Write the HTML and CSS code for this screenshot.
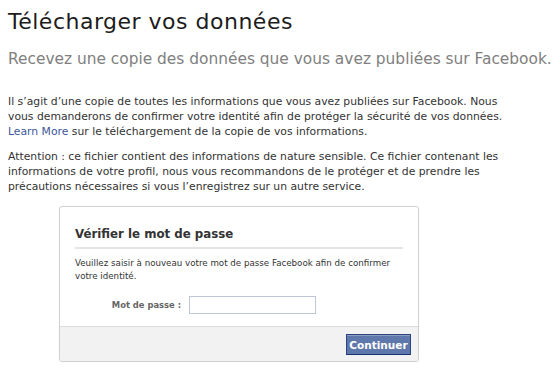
FILE: index.html
```html
<!DOCTYPE html>
<html lang="fr">
<head>
    <meta charset="UTF-8">
    <title>Télécharger vos données</title>
    <link rel="stylesheet" href="styles.css">
</head>
<body>
    <h1 class="title">Télécharger vos données</h1>
    <h2 class="subtitle">Recevez une copie des données que vous avez publiées sur Facebook.</h2>

    <p class="info">Il s’agit d’une copie de toutes les informations que vous avez publiées sur Facebook. Nous vous demanderons de confirmer votre identité afin de protéger la sécurité de vos données. <a href="#">Learn More</a> sur le téléchargement de la copie de vos informations.</p>
    <p class="info">Attention : ce fichier contient des informations de nature sensible. Ce fichier contenant les informations de votre profil, nous vous recommandons de le protéger et de prendre les précautions nécessaires si vous l’enregistrez sur un autre service.</p>

    <div class="dialog">
        <div class="dialog-body">
            <h3 class="dialog-title">Vérifier le mot de passe</h3>
            <p class="dialog-text">Veuillez saisir à nouveau votre mot de passe Facebook afin de confirmer votre identité.</p>
            <div class="field">
                <label for="password">Mot de passe :</label>
                <input type="password" id="password">
            </div>
        </div>
        <div class="dialog-footer">
            <button type="button">Continuer</button>
        </div>
    </div>
</body>
</html>
```

FILE: styles.css
```css
body {
    margin: 0;
    padding: 9px 8px 0 8px;
    font-family: "DejaVu Sans", sans-serif;
    font-size: 11px;
    color: #333;
    background: white;
}
.title {
    margin: 0;
    font-size: 22px;
    font-weight: normal;
    letter-spacing: 0.5px;
    line-height: 26px;
    color: #1c1c1c;
}
.subtitle {
    margin: 14px 0 0 0;
    font-size: 15.4px;
    font-weight: normal;
    line-height: 20px;
    color: #808080;
}
.info {
    margin: 25px 0 0 0;
    line-height: 15px;
    max-width: 505px;
    font-size: 10.8px;
}
.info + .info {
    margin-top: 10px;
}
a {
    color: #3b5998;
    text-decoration: none;
}
.dialog {
    margin: 12px 0 0 51px;
    width: 358px;
    border: 1px solid #d0d0d0;
    border-radius: 3px;
    box-shadow: 0 1px 1px rgba(0, 0, 0, 0.06);
    overflow: hidden;
}
.dialog-body {
    padding: 20px 15px 12px 15px;
}
.dialog-title {
    margin: 0;
    padding-bottom: 5px;
    border-bottom: 2px solid #e4e4e4;
    font-size: 11.8px;
    line-height: 15px;
    color: #333;
}
.dialog-text {
    margin: 8px 0 0 0;
    font-size: 8.7px;
    line-height: 13px;
}
.field {
    display: flex;
    align-items: center;
    gap: 8px;
    margin-top: 13px;
}
label {
    width: 106px;
    text-align: right;
    font-size: 8.4px;
    font-weight: bold;
    color: #666;
}
input {
    width: 127px;
    height: 18px;
    box-sizing: border-box;
    border: 1px solid #bdc7d8;
    padding: 2px;
}
.dialog-footer {
    display: flex;
    justify-content: flex-end;
    padding: 7px 7px 6px 7px;
    background: #f2f2f2;
    border-top: 1px solid #dcdcdc;
}
button {
    height: 21px;
    width: 65px;
    padding: 0;
    background: #5f78ab;
    color: white;
    font-family: "DejaVu Sans", sans-serif;
    font-size: 10.5px;
    font-weight: bold;
    border: 1px solid #29447e;
    border-color: #29447e #29447e #1a356e;
    box-shadow: inset 0 1px 0 #8a9cc2;
}
```
